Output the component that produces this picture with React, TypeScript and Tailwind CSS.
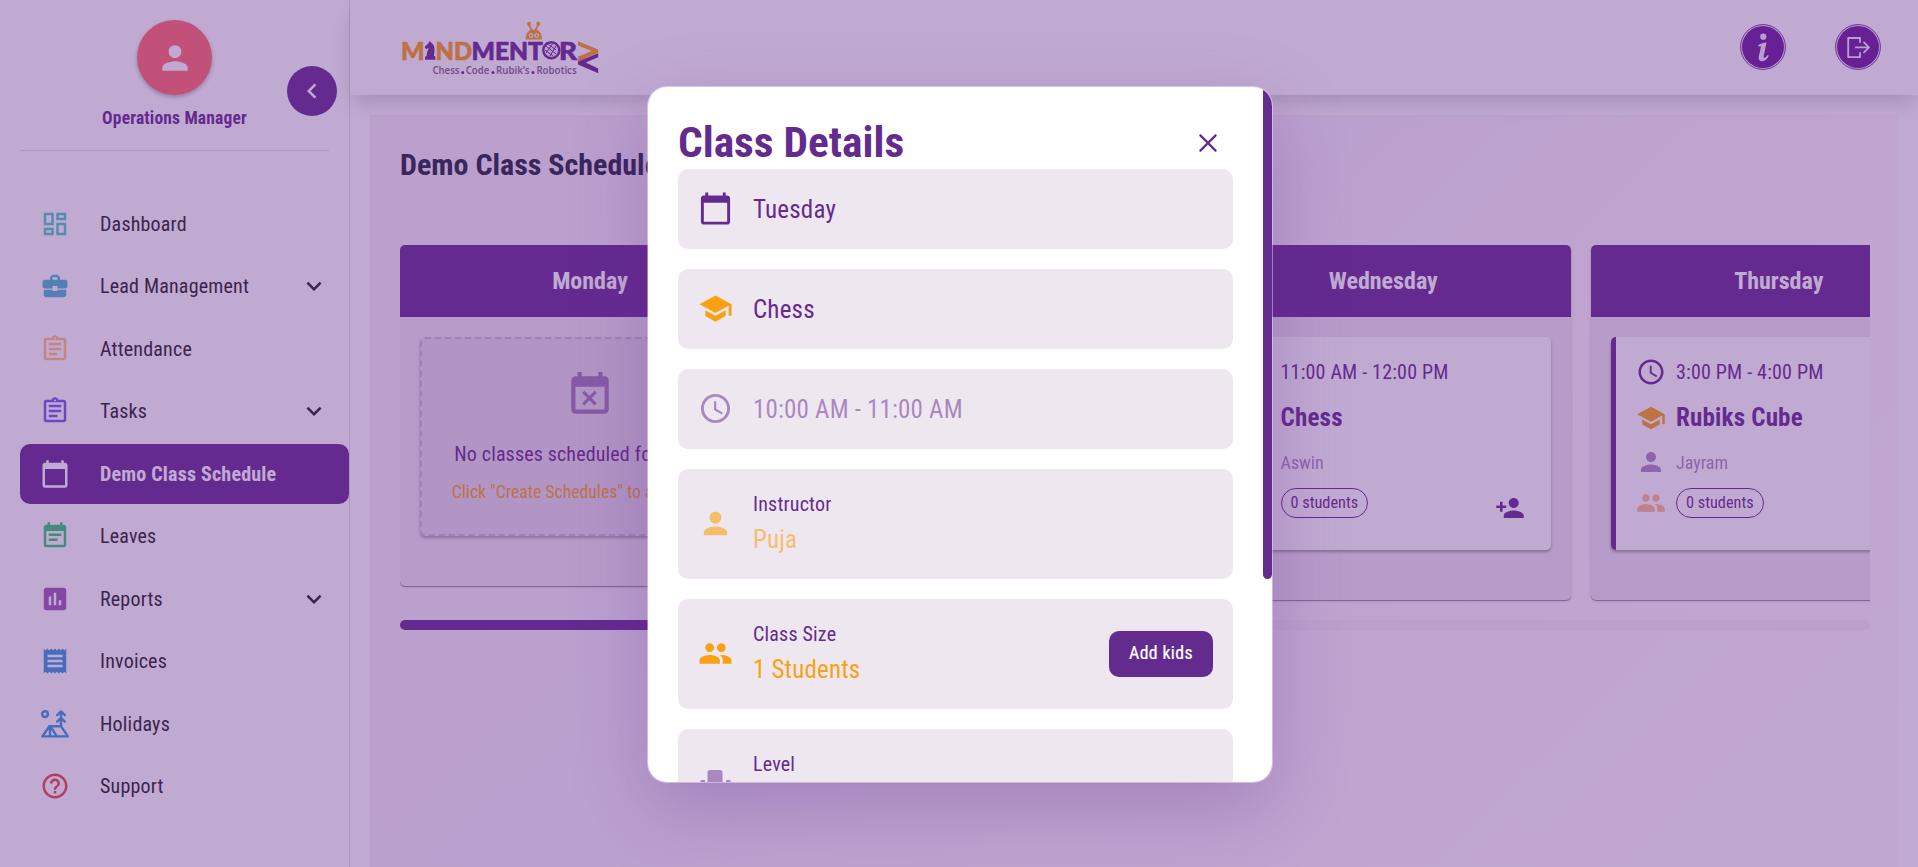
import type { ReactNode } from "react";
import type { IconType } from "react-icons";
import {
  MdOutlineDashboard,
  MdBusinessCenter,
  MdOutlineAssignment,
  MdCalendarToday,
  MdEventNote,
  MdAssessment,
  MdReceipt,
  MdHelpOutline,
  MdPerson,
  MdChevronLeft,
  MdExpandMore,
  MdEventBusy,
  MdAccessTime,
  MdSchool,
  MdPeople,
} from "react-icons/md";

function CampIcon() {
  return (
    <svg viewBox="0 0 30 30" className="size-[30px]" fill="none" stroke="currentColor" strokeWidth="2.4" strokeLinecap="round" strokeLinejoin="round">
      <circle cx="5" cy="5.1" r="2.9" />
      <path d="M21 17V3M17.200 6.200 21 2.400l3.800 3.800M17.200 12.600 21 8.800l3.800 3.800" />
      <path d="M2.400 27.400h25.400L21 17.200H9.400L2.400 27.400ZM10 17.200v10.200M10.400 17.200l6.400 10.200" />
    </svg>
  );
}

type NavEntry = { label: string; color: string; Icon?: IconType; caret?: boolean; active?: boolean };

const nav: NavEntry[] = [
  { label: "Dashboard", color: "text-[#4ecdc4]", Icon: MdOutlineDashboard },
  { label: "Lead Management", color: "text-[#45b7d1]", Icon: MdBusinessCenter, caret: true },
  { label: "Attendance", color: "text-[#ffc37d]", Icon: MdOutlineAssignment },
  { label: "Tasks", color: "text-[#6c5ce7]", Icon: MdOutlineAssignment, caret: true },
  { label: "Demo Class Schedule", color: "text-white", Icon: MdCalendarToday, active: true },
  { label: "Leaves", color: "text-[#2ecc71]", Icon: MdEventNote },
  { label: "Reports", color: "text-[#9b59b6]", Icon: MdAssessment, caret: true },
  { label: "Invoices", color: "text-[#3498db]", Icon: MdReceipt },
  { label: "Holidays", color: "text-[#3498db]" },
  { label: "Support", color: "text-[#e74c3c]", Icon: MdHelpOutline },
];

function Sidebar() {
  return (
    <aside className="relative flex h-full w-[350px] shrink-0 flex-col border-r border-black/12 bg-white">
      <div className="mx-5 flex h-[151px] w-[309px] flex-col items-center border-b border-black/12 pt-5">
        <div className="flex size-[75px] items-center justify-center rounded-full bg-[#ff6b6b] text-white shadow-[0_2px_4px_rgba(0,0,0,0.3)]">
          <MdPerson className="size-[38px]" />
        </div>
        <div className="mt-[9px] text-[17.5px] leading-7 font-bold tracking-[0.17px] text-[#642b8f]">Operations Manager</div>
      </div>
      <button className="absolute top-[66px] left-[287px] flex size-[50px] items-center justify-center rounded-full bg-[#642b8f] text-white">
        <MdChevronLeft className="size-[30px]" />
      </button>
      <nav className="mt-[42.6px] ml-5 flex flex-col gap-[2.5px]">
        {nav.map(({ label, color, Icon, caret, active }) => (
          <div
            key={label}
            className={
              active
                ? "flex h-[60px] items-center rounded-[10px] bg-[#642b8f] pl-5 text-white"
                : "flex h-[60px] items-center pl-5 text-[#212121]"
            }
          >
            <span className={color}>{Icon ? <Icon className="size-[30px]" /> : <CampIcon />}</span>
            <span className={active ? "ml-[30px] flex-1 text-[20px] font-bold tracking-[0.19px]" : "ml-[30px] flex-1 text-[20px] tracking-[0.19px]"}>
              {label}
            </span>
            {caret && <MdExpandMore className="mr-5 size-[30px]" />}
          </div>
        ))}
      </nav>
    </aside>
  );
}

function Logo() {
  return (
    <svg viewBox="0 0 200 56" className="h-[56px] w-[200px]">
      <g fontFamily="Lato, sans-serif" fontWeight="900" fontSize="25.5" strokeWidth="0.7">
        <g fill="#f8a213" stroke="#f8a213">
          <text x="1" y="39.5" textLength="23.5" lengthAdjust="spacingAndGlyphs">M</text>
          <text x="35.500" y="39.5" textLength="36.500" lengthAdjust="spacingAndGlyphs">ND</text>
        </g>
        <g fill="#642b8f" stroke="#642b8f">
          <text x="71.500" y="39.5" textLength="71.500" lengthAdjust="spacingAndGlyphs">MENT</text>
          <text x="159" y="39.5" textLength="18" lengthAdjust="spacingAndGlyphs">R</text>
        </g>
      </g>
      <path fill="#642b8f" d="M25 39.800v-2.800l1.600-1.200c.2-4 1.500-6 2.400-8l-2.800 1.500-1.600-2.200 4.200-4.400 1-1.900 1 1.600c3.600 1.400 4.600 6.500 3.200 13.100l1.400 1.300v3z" />
      <circle cx="151.300" cy="30.300" r="8" fill="#f3eaf8" stroke="#642b8f" strokeWidth="2.400" />
      <path stroke="#642b8f" strokeWidth="1" fill="none" d="m146 26 10 8m-8-10 8 6m-11 0 8 6m0-13-7 10m10-7-6 10m-3-14-4 6" />
      <path fill="#f8a213" d="M125.600 19.500c0-7 3.400-10 8.200-10s8.200 3 8.200 10z" />
      <path stroke="#f8a213" strokeWidth="1.700" d="m132 11-3.500-7m6.500 7 3.700-7" />
      <circle cx="129" cy="3.800" r="2" fill="#f8a213" />
      <circle cx="138.300" cy="3.800" r="2" fill="#f8a213" />
      <circle cx="131.200" cy="15.500" r="1.800" fill="#f8a213" stroke="#fff" strokeWidth="1.100" />
      <circle cx="136.700" cy="15.500" r="1.800" fill="#f8a213" stroke="#fff" strokeWidth="1.100" />
      <path fill="#f8a213" d="M178 21.200v4.400l13.500 5.400-13.500 5.800v4.800l20.200-8.800v-3.200z" />
      <path fill="#642b8f" d="M198.200 33.200v4l-12.500 5.200 12.500 6v4.800l-20.200-8.600v-3.200z" />
      <g fontFamily="'Noto Sans', sans-serif" fontWeight="600" fontSize="10.300" fill="#7d6a8c">
        <text x="32.500" y="53.600" textLength="27" lengthAdjust="spacingAndGlyphs">Chess</text>
        <text x="65.800" y="53.600" textLength="23.500" lengthAdjust="spacingAndGlyphs">Code</text>
        <text x="96" y="53.600" textLength="33.500" lengthAdjust="spacingAndGlyphs">Rubik’s</text>
        <text x="136.400" y="53.600" textLength="40.300" lengthAdjust="spacingAndGlyphs">Robotics</text>
      </g>
      <g fill="#642b8f">
        <circle cx="62.700" cy="52.600" r="1.500" />
        <circle cx="93" cy="52.600" r="1.500" />
        <circle cx="133" cy="52.600" r="1.500" />
      </g>
    </svg>
  );
}

function RoundBadge({ children }: { children: ReactNode }) {
  return (
    <svg viewBox="0 0 46 46" className="size-[46px]">
      <circle cx="23" cy="23" r="22.400" fill="#f4ecf9" stroke="#6a1b9a" strokeWidth="0.900" />
      <circle cx="23" cy="23" r="21" fill="#6a1b9a" />
      {children}
    </svg>
  );
}

function Header() {
  return (
    <header className="relative flex h-[95px] shrink-0 items-center justify-between bg-white pr-[37px] pl-[50px] shadow-[0_10px_20px_-4px_rgba(0,0,0,0.2)]">
      <Logo />
      <div className="flex gap-[49px] pb-px">
        <RoundBadge>
          <circle cx="23.300" cy="12.700" r="3.100" fill="#f4ecf9" />
          <path fill="#f4ecf9" d="M18 21.500C20 19.500 23 18.600 26.600 18.400L23.800 31.500C23.400 33.600 24 34.200 25.200 33.600 26.200 33 27 32 27.600 31L28.800 31.800C27.400 35 25 37.200 22 37.200 19.200 37.200 18.200 35.400 18.800 32.600L20.800 23.600C21.100 22 20.600 21.800 18.300 22.600Z" />
        </RoundBadge>
        <RoundBadge>
          <path fill="none" stroke="#f4ecf9" strokeWidth="1.800" strokeLinejoin="round" strokeLinecap="round" d="M25 18V14H13.200v19.200H25v-4.400M20.800 23.400h13M29 18.400l5 5-5 5" />
        </RoundBadge>
      </div>
    </header>
  );
}

function DayColumn({ day, width, height, children }: { day: string; width: string; height: string; children: ReactNode }) {
  return (
    <div className={`${width} ${height} shrink-0 rounded-[5px] bg-[#efe8f0] shadow-[0_1px_1px_rgba(0,0,0,0.4),0_1px_4px_rgba(0,0,0,0.1)]`}>
      <div className="flex h-[72px] items-center justify-center rounded-t-[5px] bg-[#642b8f] text-[24px] font-bold text-white">{day}</div>
      <div className="p-5">{children}</div>
    </div>
  );
}

function ClassCard({ time, subject, tutor }: { time: string; subject: string; tutor: string }) {
  return (
    <div className="flex h-[213px] flex-col rounded-[5px] border-l-[5px] border-[#642b8f] bg-white pt-5 pr-[26px] pl-5 text-[#642b8f] shadow-[0_2px_3px_rgba(0,0,0,0.35)]">
      <div className="flex h-[30px] items-center gap-[10px] text-[20px] tracking-[0.19px]">
        <MdAccessTime className="size-[30px]" />
        {time}
      </div>
      <div className="mt-[16px] flex h-[30px] items-center gap-[10px] text-[25px] font-bold tracking-[0.19px]">
        <MdSchool className="mb-px size-[30px] text-[#f8a213]" />
        {subject}
      </div>
      <div className="mt-[14px] flex h-[30px] items-center gap-[10px] text-[18px] opacity-55">
        <MdPerson className="size-[30px]" />
        {tutor}
      </div>
      <div className="mt-[11px] flex h-[30px] items-center">
        <MdPeople className="size-[30px] text-[#f8903f] opacity-60" />
        <span className="ml-[10px] flex h-[30px] items-center rounded-full border border-[#642b8f] px-[9px] text-[16.25px] leading-none">0 students</span>
        <svg viewBox="0 0 24 24" className="mt-[10px] ml-auto size-[30px]" fill="currentColor">
          <path d="M15 12c2.210 0 4-1.790 4-4s-1.790-4-4-4-4 1.790-4 4 1.790 4 4 4zm-9-2V7H4v3H1v2h3v3h2v-3h3v-2H6zm9 4c-2.670 0-8 1.340-8 4v2h16v-2c0-2.660-5.330-4-8-4z" />
        </svg>
      </div>
    </div>
  );
}

function Schedule() {
  return (
    <main className="mx-5 mt-5 flex flex-1 flex-col bg-[linear-gradient(135deg,#f5edf6_0%,#f5f0fa_40%,#fcf5fb_60%,#fdfbff_100%)] pt-[30px] pr-[28px] pl-[30px]">
      <h1 className="text-[30px] leading-[40px] font-bold text-[#1c233c]">Demo Class Schedule</h1>
      <div className="mt-[60px] flex h-[360px] items-start gap-5 overflow-hidden">
        <DayColumn day="Monday" width="w-[380px]" height="h-[341px]">
          <div className="flex h-[199px] flex-col items-center rounded-[5px] border-2 border-dashed border-[#642b8f]/20 bg-[#e6dce9] pt-[31px] shadow-[0_2px_3px_rgba(0,0,0,0.3)]">
            <MdEventBusy className="size-[50px] text-[#642b8f] opacity-55" />
            <div className="mt-[19px] text-[20px] leading-[30px] tracking-[0.15px] whitespace-nowrap text-[#642b8f]">No classes scheduled for Monday</div>
            <div className="mt-[9px] text-[17.7px] leading-[28px] whitespace-nowrap text-[#f8a213]">Click "Create Schedules" to add classes</div>
          </div>
        </DayColumn>
        <DayColumn day="Tuesday" width="w-[375.500px]" height="h-[355px]">
          <ClassCard time="10:00 AM - 11:00 AM" subject="Chess" tutor="Puja" />
        </DayColumn>
        <DayColumn day="Wednesday" width="w-[375.500px]" height="h-[355px]">
          <ClassCard time="11:00 AM - 12:00 PM" subject="Chess" tutor="Aswin" />
        </DayColumn>
        <DayColumn day="Thursday" width="w-[375.500px]" height="h-[355px]">
          <ClassCard time="3:00 PM - 4:00 PM" subject="Rubiks Cube" tutor="Jayram" />
        </DayColumn>
      </div>
      <div className="mt-[15px] h-[10px] rounded-full bg-[#f3eff3]">
        <div className="h-full w-[700px] rounded-full bg-[#642b8f]" />
      </div>
    </main>
  );
}

function Row({ icon, children, tall }: { icon: ReactNode; children: ReactNode; tall?: boolean }) {
  return (
    <div className={`flex ${tall ? "h-[110px]" : "h-[80px]"} shrink-0 items-center gap-5 rounded-[10px] bg-[#efe7f0] px-5`}>
      <span className="-mt-[2px]">{icon}</span>
      {children}
    </div>
  );
}

function Field({ label, children }: { label: string; children: ReactNode }) {
  return (
    <div className="flex flex-col pt-px">
      <span className="text-[20px] leading-[30px] tracking-[0.19px] text-[#642b8f]">{label}</span>
      <span className="mt-[1px] text-[25px] leading-[40px]">{children}</span>
    </div>
  );
}

function ClassDetails() {
  return (
    <div className="relative flex h-[697px] w-[626px] justify-between overflow-hidden rounded-[20px] border border-white/40 bg-white bg-clip-padding shadow-[0_25px_75px_rgba(100,43,143,0.28)]">
      <div className="flex w-[585px] flex-col pt-[30px] pl-[30px] text-[#642b8f]">
        <div className="flex h-[52px] shrink-0 items-center justify-between pr-[10px]">
          <h2 className="text-[43.4px] leading-[52px] font-bold">Class Details</h2>
          <svg viewBox="0 0 30 30" className="size-[30px]" fill="none" stroke="currentColor" strokeWidth="2.200" strokeLinecap="round">
            <path d="m7.400 7.400 15.200 15.200M22.600 7.400 7.400 22.600" />
          </svg>
        </div>
        <div className="flex flex-col gap-5 text-[25px] tracking-[0.19px]">
          <Row icon={<MdCalendarToday className="size-[35px]" />}>
            <span className="pt-[2px]">Tuesday</span>
          </Row>
          <Row icon={<MdSchool className="size-[35px] text-[#f8a213]" />}>
            <span className="pt-[2px]">Chess</span>
          </Row>
          <Row icon={<MdAccessTime className="size-[35px] opacity-50" />}>
            <span className="pt-[2px] opacity-50">10:00 AM - 11:00 AM</span>
          </Row>
          <Row tall icon={<MdPerson className="size-[35px] text-[#f8a213] opacity-60" />}>
            <Field label="Instructor">
              <span className="text-[#f8a213] opacity-60">Puja</span>
            </Field>
          </Row>
          <Row tall icon={<MdPeople className="size-[35px] text-[#f8a213]" />}>
            <Field label="Class Size">
              <span className="text-[#f8a213]">1 Students</span>
            </Field>
            <button className="ml-auto h-[46px] w-[104px] rounded-[10px] bg-[#642b8f] pb-[2px] text-[17.8px] font-normal tracking-[0.35px] text-white [-webkit-text-stroke:0.2px_white]">
              Add kids
            </button>
          </Row>
          <Row
            tall
            icon={
              <svg viewBox="0 0 35 35" className="size-[35px] opacity-50" fill="currentColor">
                <path d="M12 4h10q2.500 0 2.500 2.500V20h-15V6.500Q9.500 4 12 4ZM2.500 14H7v11h21V14h4.500v15h-30z" />
              </svg>
            }
          >
            <Field label="Level">Beginner</Field>
          </Row>
        </div>
      </div>
      <div className="h-[492px] w-[9.500px] rounded-full bg-[#642b8f]" />
    </div>
  );
}

export default function App() {
  return (
    <div className="relative flex h-[867px] w-[1918px] overflow-hidden bg-white font-['Roboto_Condensed',Roboto,sans-serif] [font-stretch:75%]">
      <Sidebar />
      <div className="flex min-w-0 flex-1 flex-col">
        <Header />
        <Schedule />
      </div>
      <div className="absolute inset-0 flex items-center justify-center bg-[#642b8f]/40 pt-[2px] pl-[2px]">
        <ClassDetails />
      </div>
    </div>
  );
}
